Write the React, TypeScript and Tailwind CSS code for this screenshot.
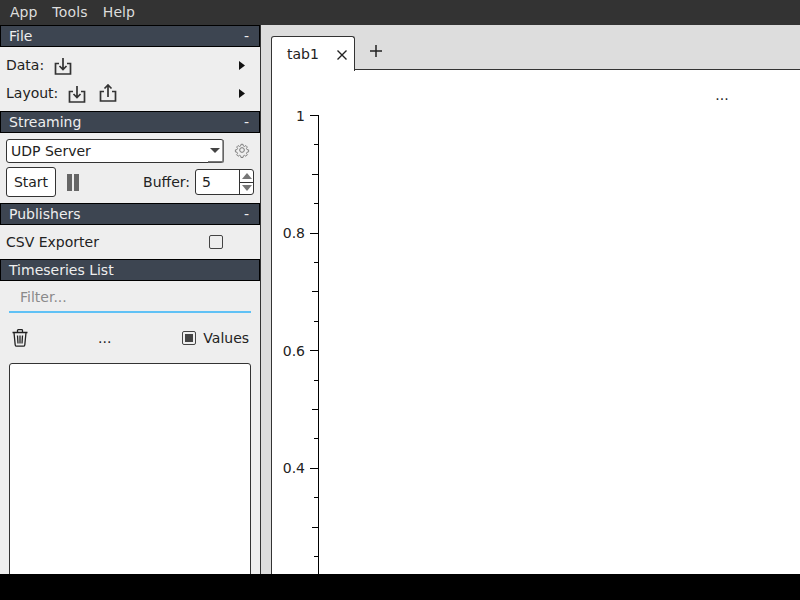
const font = "font-['DejaVu_Sans',sans-serif]";

function SectionHeader({ title, collapse = true }: { title: string; collapse?: boolean }) {
  return (
    <div className="flex h-[22px] shrink-0 items-center justify-between border border-black bg-[#3d4551] pl-2 pr-[10px] text-[14px] text-[#eeeeee]">
      <span>{title}</span>
      {collapse && <span>-</span>}
    </div>
  );
}

function ImportIcon() {
  return (
    <svg width="18" height="17" viewBox="0 0 18 17" fill="none" stroke="#333" strokeWidth="1.7" className="mt-[3px]">
      <path d="M5 5.500H1.500V16H16.500V5.500H13" />
      <path d="M9 0V11M5.500 8L9 11.500L12.500 8" />
    </svg>
  );
}

function ExportIcon() {
  return (
    <svg width="18" height="18" viewBox="0 0 18 18" fill="none" stroke="#333" strokeWidth="1.7">
      <path d="M5 7.500H1.500V17H16.500V7.500H13" />
      <path d="M9 13V1M5.500 4.500L9 1L12.500 4.500" />
    </svg>
  );
}

function Arrow() {
  return (
    <svg width="6" height="9" viewBox="0 0 6 9" className="ml-auto mr-[15px]">
      <path d="M0 0L6 4.500L0 9Z" fill="#111" />
    </svg>
  );
}

function Gear() {
  return (
    <svg width="16" height="16" viewBox="0 0 24 24" fill="none" stroke="#777" strokeWidth="1.5" strokeLinejoin="round">
      <path d="M10.300 2.500h3.400l.5 2.700 2 .9 2.300-1.500 2.400 2.400-1.500 2.300.9 2 2.700.5v3.400l-2.700.5-.9 2 1.500 2.300-2.400 2.400-2.300-1.500-2 .9-.5 2.700h-3.400l-.5-2.700-2-.9-2.300 1.500-2.400-2.400 1.500-2.300-.9-2-2.700-.5v-3.400l2.700-.5.9-2-1.500-2.300 2.400-2.400 2.300 1.500 2-.9z" transform="translate(1.200 1.200) scale(.9)" />
      <circle cx="12" cy="12" r="3.500" />
    </svg>
  );
}

function Trash() {
  return (
    <svg width="16" height="18" viewBox="0 0 16 18" fill="none" stroke="#222" strokeWidth="1.3">
      <path d="M.5 3.500H15.500M5.500 3.500V1.500Q5.500 .7 6.300 .7H9.700Q10.500 .7 10.500 1.500V3.500" />
      <path d="M2 3.500L3.200 15.800Q3.400 17.200 4.600 17.200H11.400Q12.600 17.200 12.800 15.800L14 3.500" />
      <path d="M5.500 6.500L6 14.500M8 6.500V14.500M10.500 6.500L10 14.500" />
    </svg>
  );
}

const labels = [
  { text: "1", y: 121 },
  { text: "0.8", y: 238 },
  { text: "0.6", y: 356 },
  { text: "0.4", y: 473 },
];

function PlotAxis() {
  // ticks every 0.05 of the axis, 29.4px apart, starting at row 115
  const ticks = Array.from({ length: 16 }, (_, i) => Math.round(115 + i * 29.4));
  return (
    <svg className="absolute left-0 top-0" width="528" height="574" viewBox="272 0 528 574" fontFamily="DejaVu Sans" fontSize="14" fill="#222">
      <path d="M318.500 115V574" stroke="#000" strokeWidth="1" />
      {ticks.map((y, i) => {
        const len = i % 4 === 0 ? 8 : i % 2 === 0 ? 6 : 4;
        return <path key={y} d={`M${318 - len} ${y + 0.5}H319`} stroke="#000" strokeWidth="1" />;
      })}
      {labels.map((l) => (
        <text key={l.text} x="305" y={l.y} textAnchor="end">{l.text}</text>
      ))}
      <text x="722" y="100" textAnchor="middle">...</text>
    </svg>
  );
}

export default function App() {
  return (
    <div className={`${font} flex h-[600px] w-[800px] flex-col overflow-hidden bg-black text-[14px] text-[#222]`}>
      {/* menu */}
      <div className="flex h-[25px] shrink-0 items-center bg-[#333333] pl-[10px] text-[14px] text-[#dddddd]">
        <span>App</span>
        <span className="ml-[15px] tracking-[0.2px]">Tools</span>
        <span className="ml-[15px]">Help</span>
      </div>

      <div className="flex h-[549px] shrink-0">
        {/* sidebar */}
        <div className="flex w-[261px] shrink-0 flex-col overflow-hidden border-r border-[#333] bg-[#eeeeee]">
          <SectionHeader title="File" />
          <div className="flex h-[64px] shrink-0 flex-col pl-[6px] pt-[4px]">
            <div className="flex h-[28px] items-center">
              <span className="mr-[10px]">Data:</span>
              <ImportIcon />
              <Arrow />
            </div>
            <div className="flex h-[28px] items-center">
              <span className="mr-[10px]">Layout:</span>
              <ImportIcon />
              <span className="ml-[13px] flex"><ExportIcon /></span>
              <Arrow />
            </div>
          </div>

          <SectionHeader title="Streaming" />
          <div className="flex h-[70px] shrink-0 flex-col px-[6px] pt-[6px]">
            <div className="flex items-center">
              <div className="relative flex h-[24px] w-[218px] items-center rounded-[3px] border border-[#333] bg-white pl-[4px]">
                <span>UDP Server</span>
                <svg width="17" height="24" viewBox="0 0 17 24" className="absolute right-[-1px] top-[-1px]">
                  <path d="M3 9H13L8 14Z" fill="#444" />
                  <path d="M1 22.800H16V1" fill="none" stroke="#777" strokeWidth="1.500" />
                </svg>
              </div>
              <span className="ml-[10px] mt-[-2px]"><Gear /></span>
            </div>
            <div className="mt-[4px] flex items-center">
              <div className="flex h-[30px] w-[50px] items-center justify-center rounded-[3px] border border-[#333] bg-white">Start</div>
              <div className="ml-[11px] flex gap-[2px]">
                <div className="h-[17px] w-[5px] bg-[#666]" />
                <div className="h-[17px] w-[5px] bg-[#666]" />
              </div>
              <span className="ml-auto mr-[5px]">Buffer:</span>
              <div className="flex h-[26px] w-[59px] items-center rounded-[3px] border border-[#333] bg-white pl-[6px]">
                <span>5</span>
                <div className="ml-auto flex h-full w-[14px] flex-col border-l border-[#333]">
                  <div className="flex flex-1 items-center justify-center border-b border-[#333]">
                    <svg width="10" height="6" viewBox="0 0 10 6"><path d="M0 6L5 0L10 6Z" fill="#777" /></svg>
                  </div>
                  <div className="flex flex-1 items-center justify-center">
                    <svg width="10" height="6" viewBox="0 0 10 6"><path d="M0 0L10 0L5 6Z" fill="#777" /></svg>
                  </div>
                </div>
              </div>
            </div>
          </div>

          <SectionHeader title="Publishers" />
          <div className="flex h-[34px] shrink-0 items-center pl-[6px]">
            <span>CSV Exporter</span>
            <div className="ml-[110px] h-[14px] w-[14px] rounded-[2px] border border-[#444] bg-[#eeeeee]" />
          </div>

          <SectionHeader title="Timeseries List" collapse={false} />
          <div className="mx-[9px] flex h-[32px] w-[242px] shrink-0 items-center border-b-2 border-[#5fc1f5] pl-[11px] pt-[3px] text-[#8a8a8a]">
            Filter...
          </div>
          <div className="flex h-[50px] shrink-0 items-center pl-[12px]">
            <Trash />
            <span className="ml-[70px]">...</span>
            <div className="ml-[71px] flex h-[14px] w-[14px] items-center justify-center rounded-[2px] border border-[#444]">
              <div className="h-[8px] w-[8px] bg-[#444]" />
            </div>
            <span className="ml-[7px]">Values</span>
          </div>
          <div className="ml-[9px] h-[300px] w-[242px] shrink-0 rounded-[3px] border border-[#333] bg-white" />
        </div>

        {/* tabs and plot */}
        <div className="relative flex-1 bg-[#dddddd]">
          <div className="flex h-[45px] items-end pl-[10px]">
            <div className="relative z-10 mb-[-1px] flex h-[35px] w-[84px] items-center rounded-t-[3px] border border-b-0 border-[#333] bg-white pl-[15px]">
              <span>tab1</span>
              <svg width="10" height="10" viewBox="0 0 10 10" className="ml-[18px] mt-[2px]">
                <path d="M.5 .5L9.500 9.500M9.500 .5L.5 9.500" stroke="#222" strokeWidth="1.400" />
              </svg>
            </div>
            <svg width="12" height="12" viewBox="0 0 12 12" className="mb-[13px] ml-[15px]">
              <path d="M6 0V12M0 6H12" stroke="#222" strokeWidth="1.500" />
            </svg>
          </div>
          <div className="absolute bottom-0 left-[10px] right-0 top-[44px] overflow-hidden border-l border-t border-[#333] bg-white">
            <div className="absolute left-0 top-[-70px]">
              <PlotAxis />
            </div>
          </div>
        </div>
      </div>
    </div>
  );
}
